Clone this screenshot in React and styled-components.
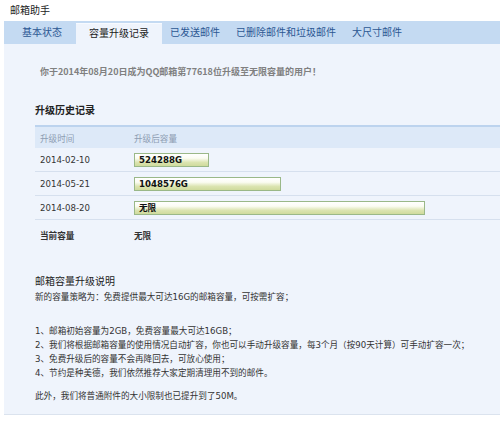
import React from "react";
import styled, { createGlobalStyle } from "styled-components";

const GlobalStyle = createGlobalStyle`
  html, body {
    margin: 0;
    padding: 0;
    background: #ffffff;
  }
  body {
    font-family: "DejaVu Sans", "Noto Sans CJK SC", sans-serif;
    color: #333;
    -webkit-font-smoothing: antialiased;
  }
`;

const Page = styled.div`
  width: 500px;
  height: 422px;
  overflow: hidden;
`;

const PageTitle = styled.div`
  height: 21px;
  line-height: 22px;
  padding-left: 10px;
  font-size: 10px;
  color: #222;
`;

const TabBar = styled.div`
  margin-left: 4px;
  height: 23px;
  background: #c4daf2;
  display: flex;
  align-items: flex-end;
  padding-left: 10px;
`;

const Tab = styled.div`
  height: ${(p) => (p.$active ? "20px" : "23px")};
  line-height: ${(p) => (p.$active ? "20px" : "23px")};
  padding: 0 ${(p) => (p.$active ? "13px" : "8px")};
  margin-left: ${(p) => (p.$active ? "6px" : "0")};
  font-size: 10px;
  color: ${(p) => (p.$active ? "#1a1a1a" : "#2c5792")};
  background: ${(p) => (p.$active ? "#eff4fc" : "transparent")};
  border-top: ${(p) => (p.$active ? "1px solid #f7faff" : "none")};
  white-space: nowrap;
`;

const Panel = styled.div`
  margin-left: 4px;
  height: 348px;
  background: #eff4fc;
  border-bottom: 1px solid #dbe3ee;
  padding: 22px 0 0 31px;
`;

const Notice = styled.div`
  padding-left: 5px;
  line-height: 12px;
  font-family: "Noto Sans CJK SC", sans-serif;
  font-size: 9px;
  font-weight: bold;
  color: #808080;
  white-space: nowrap;
`;

const SectionTitle = styled.div`
  margin-top: ${(p) => (p.$flush ? 0 : 27)}px;
  line-height: 12px;
  font-size: 10px;
  font-weight: ${(p) => (p.$bold ? "bold" : "normal")};
  color: #222;
`;

const Table = styled.div`
  margin-top: 8px;
  border-top: 2px solid #bcd3ee;
`;

const Row = styled.div`
  display: grid;
  grid-template-columns: 99px 1fr;
  align-items: center;
  height: ${(p) => p.$height || 23}px;
  border-bottom: ${(p) => (p.$plain ? "none" : "1px solid #d6e0ee")};
  background: ${(p) => (p.$head ? "#dde9f8" : "transparent")};
  font-size: 8.6px;
  color: ${(p) => (p.$head ? "#8d9db3" : "#333")};
  font-weight: ${(p) => (p.$bold ? "bold" : "normal")};
  box-sizing: border-box;
`;

const Cell = styled.div`
  padding-left: ${(p) => (p.$first ? "5px" : "0")};
  white-space: nowrap;
`;

const Bar = styled.div`
  height: 14px;
  box-sizing: border-box;
  border: 1px solid #9ab888;
  background: linear-gradient(#ffffff 0%, #fbfcf2 35%, #dbe4b0 70%, #cfdb9c 100%);
  padding-left: 4px;
  line-height: 12px;
  font-size: 8.6px;
  font-weight: bold;
  color: #111;
`;

const Explain = styled.div`
  margin-top: 26px;
`;

const Para = styled.div`
  font-size: 8.6px;
  line-height: 14px;
  color: #333;
  white-space: nowrap;
  margin-top: ${(p) => p.$gap || 0}px;
`;

const tabs = ["基本状态", "容量升级记录", "已发送邮件", "已删除邮件和垃圾邮件", "大尺寸邮件"];

const history = [
  { date: "2014-02-10", size: "524288G", width: 75 },
  { date: "2014-05-21", size: "1048576G", width: 147 },
  { date: "2014-08-20", size: "无限", width: 291 },
];

const rules = [
  "1、邮箱初始容量为2GB，免费容量最大可达16GB；",
  "2、我们将根据邮箱容量的使用情况自动扩容，你也可以手动升级容量，每3个月（按90天计算）可手动扩容一次；",
  "3、免费升级后的容量不会再降回去，可放心使用；",
  "4、节约是种美德，我们依然推荐大家定期清理用不到的邮件。",
];

export default function App() {
  return (
    <Page>
      <GlobalStyle />
      <PageTitle>邮箱助手</PageTitle>
      <TabBar>
        {tabs.map((t, i) => (
          <Tab key={t} $active={i === 1}>
            {t}
          </Tab>
        ))}
      </TabBar>
      <Panel>
        <Notice>你于2014年08月20日成为QQ邮箱第77618位升级至无限容量的用户！</Notice>
        <SectionTitle $bold>升级历史记录</SectionTitle>
        <Table>
          <Row $head $height={21} $plain>
            <Cell $first>升级时间</Cell>
            <Cell>升级后容量</Cell>
          </Row>
          {history.map((h) => (
            <Row key={h.date} $height={24}>
              <Cell $first>{h.date}</Cell>
              <Cell>
                <Bar style={{ width: h.width }}>{h.size}</Bar>
              </Cell>
            </Row>
          ))}
          <Row $plain $bold $height={30}>
            <Cell $first>当前容量</Cell>
            <Cell>无限</Cell>
          </Row>
        </Table>
        <Explain>
          <SectionTitle $flush>邮箱容量升级说明</SectionTitle>
          <Para $gap={2}>新的容量策略为：免费提供最大可达16G的邮箱容量，可按需扩容；</Para>
          <Para $gap={20}>{rules[0]}</Para>
          {rules.slice(1).map((r) => (
            <Para key={r}>{r}</Para>
          ))}
          <Para $gap={9}>此外，我们将普通附件的大小限制也已提升到了50M。</Para>
        </Explain>
      </Panel>
    </Page>
  );
}
